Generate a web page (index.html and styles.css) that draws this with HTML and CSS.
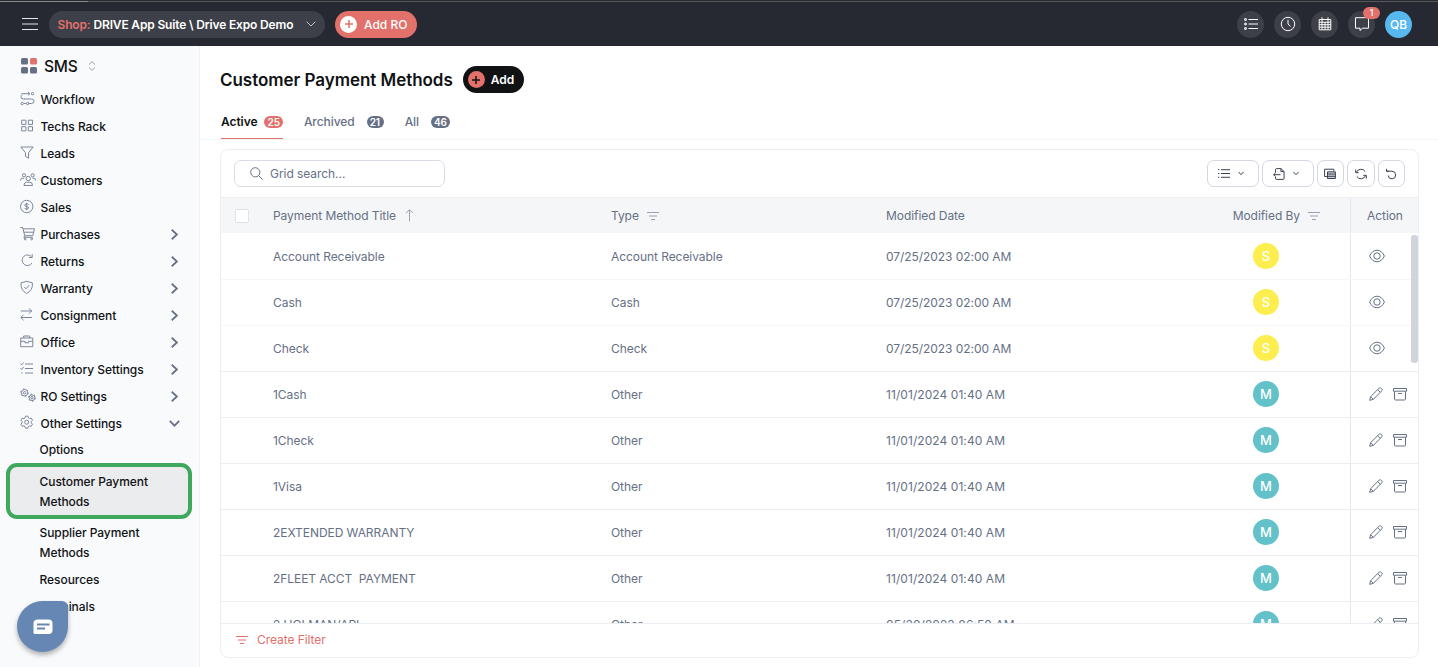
FILE: index.html
```html
<!DOCTYPE html>
<html lang="en">
<head>
<meta charset="UTF-8" />
<meta name="viewport" content="width=device-width, initial-scale=1" />
<title>Customer Payment Methods</title>
<link rel="stylesheet" href="styles.css">
</head>
<body>

<svg class="sprite" xmlns="http://www.w3.org/2000/svg">
  <symbol id="i-eye" viewBox="0 0 16 14"><path d="M.6 7C2.2 3.300 4.900 1.200 8 1.200S13.800 3.300 15.400 7C13.800 10.700 11.100 12.800 8 12.800S2.200 10.700.6 7z"/><circle cx="8" cy="7" r="3.200"/></symbol>
  <symbol id="i-pencil" viewBox="0 0 14 14"><path d="M.7 13.300l.9-3.600L10 1.300c1.500-1.500 4.200 1 2.700 2.600L4.300 12.400zM8.700 2.600l2.700 2.700M1.600 9.700l2.700 2.700"/></symbol>
  <symbol id="i-archive" viewBox="0 0 14 14"><path d="M.5 1.500h13v2.700H.5zM1.500 4.200V12q0 1 1 1h9q1 0 1-1V4.200M5 6.500h4"/></symbol>
  <symbol id="i-filter" viewBox="0 0 12 8"><path d="M0 .5h12M2 4h8M4 7.500h4"/></symbol>
  <symbol id="i-right" viewBox="0 0 8 10"><path d="M1.500.7L6.200 5 1.500 9.300"/></symbol>
  <symbol id="i-down" viewBox="0 0 10 8"><path d="M.7 1.700L5 6l4.300-4.300"/></symbol>
  <symbol id="i-list" viewBox="0 0 14 12"><path d="M4.500 1.500H14M4.500 6H14M4.500 10.500H14"/><path d="M.7.700h1.600v1.600H.7zM.7 5.200h1.600v1.600H.7zM.7 9.700h1.600v1.600H.7z"/></symbol>
</svg>

<header class="topbar">
  <svg class="menu-icon" width="16" height="12" viewBox="0 0 16 12"><path d="M0 .5h16M0 6h16M0 11.500h16"/></svg>
  <div class="shop">
    <span class="shop-label">Shop:</span>
    <span class="shop-name">DRIVE App Suite \ Drive Expo Demo</span>
    <svg class="icon shop-arrow" width="10" height="8"><use href="#i-down"/></svg>
  </div>
  <button class="add-ro">
    <span class="plus"><svg width="8" height="8" viewBox="0 0 8 8"><path d="M4 0v8M0 4h8"/></svg></span>
    Add RO
  </button>
  <div class="top-actions">
    <span class="round"><svg class="icon" width="14" height="12"><use href="#i-list"/></svg></span>
    <span class="round"><svg class="icon" width="16" height="16" viewBox="0 0 16 16"><circle cx="8" cy="8" r="6.700"/><path d="M8 3.700V8l2.500 2.500"/></svg></span>
    <span class="round"><svg class="icon" width="14" height="14" viewBox="0 0 14 14"><path d="M1.200 2.500h11.600v10.300H1.200zM1.200 5.200h11.600M1.200 7.700h11.600M1.200 10.200h11.600M4 .3V12.800M7 5v7.800M10 .3V12.800"/></svg></span>
    <span class="round"><svg class="icon" width="16" height="16" viewBox="0 0 16 16"><path d="M1.500 1.700h13v10.500H8.500L6 14.500v-2.300H1.500z"/></svg><b class="notify">1</b></span>
    <span class="round user">QB</span>
  </div>
</header>

<div class="layout">
  <aside class="sidebar">
    <div class="brand">
      <svg width="16" height="16" viewBox="0 0 16 16"><rect width="7" height="6.500" rx="1.500" fill="#667085"/><rect x="9" width="7" height="6.500" rx="1.500" fill="#e2706b"/><rect y="9" width="7" height="6.500" rx="1.500" fill="#667085"/><rect x="9" y="9" width="7" height="6.500" rx="1.500" fill="#667085"/></svg>
      <span>SMS</span>
      <svg class="icon" width="8" height="10" viewBox="0 0 8 10"><path d="M1 3.500L4 .7l3 2.800M1 6.500l3 2.800 3-2.800"/></svg>
    </div>
    <nav>
      <a class="nav-item"><svg class="icon" viewBox="0 0 16 16"><path d="M1.500 2.700h8.300M8 1l1.800 1.700L8 4.400M4 8h7.500q2.500 0 2.500 2.200t-2.500 2.300H8.200M4.500 8H3.300Q1 8 1 5.800 1 4.500 2 3.500M4 12.500h2"/><circle cx="12.500" cy="2.700" r="1.200"/><circle cx="2.200" cy="12.500" r="1.200"/><circle cx="7.600" cy="12.500" r="1.200"/></svg>Workflow</a>
      <a class="nav-item"><svg class="icon" viewBox="0 0 16 16"><path d="M1.700 2.200h4.200v4.200H1.700zM8.300 2.200h4.200v4.200H8.300zM1.700 8.700h4.200v4.200H1.700zM8.300 8.700h4.200v4.200H8.300z"/></svg>Techs Rack</a>
      <a class="nav-item"><svg class="icon" viewBox="0 0 16 16"><path d="M.8 2h12.400L8.500 7.800v5.400l-3-1.700V7.800z"/></svg>Leads</a>
      <a class="nav-item"><svg class="icon" viewBox="0 0 16 16"><circle cx="8.200" cy="6.500" r="2.200"/><circle cx="4" cy="3.300" r="1.600"/><circle cx="12.700" cy="3.300" r="1.600"/><path d="M4 13.500q0-3.300 2.500-3.300h3.500q2.500 0 2.500 3.300zM.5 8.500q0-2.300 2-2.300H4M12.500 6.200H14q1.700 0 1.700 2.300"/></svg>Customers</a>
      <a class="nav-item"><svg class="icon" viewBox="0 0 16 16"><circle cx="6.700" cy="7.500" r="6.200"/><path d="M8.600 5.800q-.4-1-1.900-1t-1.900 1.200 1.900 1.500 1.900 1.500-1.900 1.200-1.900-1M6.700 3.700v7.600"/></svg>Sales</a>
      <a class="nav-item"><svg class="icon" viewBox="0 0 16 16"><path d="M.3 1.500h2.400l2 8.200h8.100l1.700-6.900H3M4.700 9.700l-.9 1.600h9M4 6.200h9.700"/><circle cx="5.200" cy="13" r=".9"/><circle cx="11.700" cy="13" r=".9"/></svg>Purchases<svg class="icon arrow" width="8" height="10"><use href="#i-right"/></svg></a>
      <a class="nav-item"><svg class="icon" viewBox="0 0 16 16"><path d="M11.500 3.800A5.300 5.300 0 1 0 12 10M12.200 1.200v3.300H8.900"/></svg>Returns<svg class="icon arrow" width="8" height="10"><use href="#i-right"/></svg></a>
      <a class="nav-item"><svg class="icon" viewBox="0 0 16 16"><path d="M6.700 1.300l5.700 1.600q.7 7.500-5.700 10.600Q.3 10.400 1 2.900zM4.300 7l1.700 1.800 3.200-3.600"/></svg>Warranty<svg class="icon arrow" width="8" height="10"><use href="#i-right"/></svg></a>
      <a class="nav-item"><svg class="icon" viewBox="0 0 16 16"><path d="M.7 4h11M9 1.300L11.700 4 9 6.700M12 10.500H1M3.500 7.800L.8 10.500l2.700 2.700"/></svg>Consignment<svg class="icon arrow" width="8" height="10"><use href="#i-right"/></svg></a>
      <a class="nav-item"><svg class="icon" viewBox="0 0 16 16"><path d="M.7 4h12.100v8.700H.7zM3.700 4V2h6v2M.7 7.300h4.200v1.500h3.700V7.300h4.200"/></svg>Office<svg class="icon arrow" width="8" height="10"><use href="#i-right"/></svg></a>
      <a class="nav-item"><svg class="icon" viewBox="0 0 16 16"><path d="M5 3h8M5 7.500h8M5 12h8M.4 2.700l1.200 1.200 2-2.400M.4 7.200l1.200 1.200 2-2.400M1.200 12h1.500"/></svg>Inventory Settings<svg class="icon arrow" width="8" height="10"><use href="#i-right"/></svg></a>
      <a class="nav-item"><svg class="icon" viewBox="0 0 16 16"><circle cx="4.500" cy="4.700" r="3.200"/><circle cx="4.500" cy="4.700" r="1.200"/><circle cx="4.500" cy="4.700" r="3.900" stroke-dasharray="1.500 2.580"/><circle cx="12" cy="9.700" r="2.900"/><circle cx="12" cy="9.700" r="1.200"/><circle cx="12" cy="9.700" r="3.600" stroke-dasharray="1.500 2.270"/></svg>RO Settings<svg class="icon arrow" width="8" height="10"><use href="#i-right"/></svg></a>
      <a class="nav-item"><svg class="icon" viewBox="0 0 16 16"><path d="M5.500 1.200h2.400l.5 1.700 1.200.7 1.700-.4 1.200 2-1.200 1.300v1.400l1.200 1.300-1.200 2-1.700-.4-1.200.7-.5 1.700H5.500L5 11.500l-1.200-.7-1.700.4-1.200-2 1.200-1.300V6.500L.9 5.200l1.200-2 1.700.4L5 2.900z"/><circle cx="6.700" cy="7.200" r="2"/></svg>Other Settings<svg class="icon arrow" width="10" height="8"><use href="#i-down"/></svg></a>
      <a class="sub-item">Options</a>
      <a class="sub-item active">Customer Payment Methods</a>
      <a class="sub-item">Supplier Payment Methods</a>
      <a class="sub-item">Resources</a>
      <a class="sub-item">Terminals</a>
    </nav>
  </aside>

  <main>
    <div class="page-head">
      <h1>Customer Payment Methods</h1>
      <button class="add">
        <span class="plus"><svg width="8" height="8" viewBox="0 0 8 8"><path d="M4 0v8M0 4h8"/></svg></span>
        Add
      </button>
    </div>

    <div class="tabs">
      <a class="tab current">Active <span class="count">25</span></a>
      <a class="tab">Archived <span class="count">21</span></a>
      <a class="tab">All <span class="count">46</span></a>
    </div>

    <section class="card">
      <div class="toolbar">
        <div class="search">
          <svg class="icon" width="13" height="13" viewBox="0 0 13 13"><circle cx="5.300" cy="5.300" r="4.600"/><path d="M8.700 8.700l3.900 3.900"/></svg>
          <span>Grid search...</span>
        </div>
        <div class="tools">
          <button class="tool wide"><svg class="icon" width="12" height="9" viewBox="0 0 12 9"><path d="M3 .7h9M3 4.500h9M3 8.300h9M0 .7h1.300M0 4.500h1.300M0 8.300h1.300"/></svg><svg class="icon" width="6" height="5" viewBox="0 0 6 5"><path d="M.5 1L3 3.700 5.500 1"/></svg></button>
          <button class="tool wide"><svg class="icon" width="12" height="12" viewBox="0 0 12 12"><path d="M2.500 4.500V1.600q0-1 1-1h4.400l3.200 3v6.800q0 1-1 1H3.500q-1 0-1-1V9M7.900.6v3h3.200M7.500 6.700H.6M2.600 4.800l-2 1.900 2 1.900"/></svg><svg class="icon" width="6" height="5" viewBox="0 0 6 5"><path d="M.5 1L3 3.700 5.500 1"/></svg></button>
          <button class="tool"><svg class="icon" width="12" height="12" viewBox="0 0 12 12"><path d="M3 8.500H.6V1.200h9.200v2"/><path d="M3.500 3.800h7.900v6.700H3.500z" fill="#c9cdd6"/><path d="M4 6h7M4 8.300h7"/></svg></button>
          <button class="tool"><svg class="icon" width="12" height="12" viewBox="0 0 12 12"><path d="M1.300 4.500a5 5 0 0 1 9-.8M10.700 7.500a5 5 0 0 1-9 .8M.7 1.500v3.200h3M11.300 10.500V7.300h-3"/></svg></button>
          <button class="tool"><svg class="icon" width="12" height="12" viewBox="0 0 12 12"><path d="M1.500 3.200h5.400a3.800 3.800 0 1 1-3.800 4.300M1.500.8v2.400h2.400"/></svg></button>
        </div>
      </div>

      <div class="grid">
        <div class="row head">
          <div><span class="checkbox"></span></div>
          <div>Payment Method Title <svg class="icon sort" width="9" height="13" viewBox="0 0 9 13"><path d="M4.500 12.500V1M1 4.200L4.500.7 8 4.200"/></svg></div>
          <div>Type <svg class="icon" width="12" height="8"><use href="#i-filter"/></svg></div>
          <div>Modified Date</div>
          <div class="by">Modified By <svg class="icon" width="12" height="8"><use href="#i-filter"/></svg></div>
          <div class="actions">Action</div>
        </div>
        <div class="rows" id="rows"></div>
        <span class="scroll-thumb"></span>
      </div>

      <div class="card-foot">
        <svg class="icon" width="12" height="8"><use href="#i-filter"/></svg>
        <span>Create Filter</span>
      </div>
    </section>
  </main>
</div>

<div class="chat">
  <svg width="20" height="16" viewBox="0 0 20 16"><path d="M5 .5h10.500q4 0 4 4V11q0 4-4 4H2q-1.500 0-1.500-1.500V4.500q0-4 4.500-4z" fill="#fff"/><path d="M4 5.500h12.500M4 9.500h8" stroke="#6687b3" stroke-width="2"/></svg>
</div>

<script>
const methods = [
  ["Account Receivable", "Account Receivable", "07/25/2023 02:00 AM", "S"],
  ["Cash", "Cash", "07/25/2023 02:00 AM", "S"],
  ["Check", "Check", "07/25/2023 02:00 AM", "S"],
  ["1Cash", "Other", "11/01/2024 01:40 AM", "M"],
  ["1Check", "Other", "11/01/2024 01:40 AM", "M"],
  ["1Visa", "Other", "11/01/2024 01:40 AM", "M"],
  ["2EXTENDED WARRANTY", "Other", "11/01/2024 01:40 AM", "M"],
  ["2FLEET ACCT  PAYMENT", "Other", "11/01/2024 01:40 AM", "M"],
  ["2 HOLMAN/ARI", "Other", "05/30/2023 06:50 AM", "M"]
];

const viewIcon = `<svg class="icon" width="16" height="14"><use href="#i-eye"/></svg>`;
const editIcons = `<svg class="icon" width="14" height="14"><use href="#i-pencil"/></svg>
  <svg class="icon" width="14" height="14"><use href="#i-archive"/></svg>`;

// System methods (S) can only be viewed
document.getElementById("rows").innerHTML = methods.map(([title, type, date, by]) => `
  <div class="row">
    <div></div>
    <div>${title}</div>
    <div>${type}</div>
    <div class="${by === "M" ? "date" : ""}">${date}</div>
    <div class="by"><span class="avatar ${by === "S" ? "system" : ""}">${by}</span></div>
    <div class="actions">${by === "S" ? viewIcon : editIcons}</div>
  </div>`).join("");
</script>

</body>
</html>
```
FILE: styles.css
```css
* {
  box-sizing: border-box;
}
body {
  margin: 0;
  height: 667px;
  overflow: hidden;
  display: flex;
  flex-direction: column;
  font-family: Inter, "Liberation Sans", sans-serif;
  font-size: 12px;
  letter-spacing: -.06px;
  color: #667085;
  background: #fff;
}
button {
  font-family: inherit;
  border: none;
  padding: 0;
}
svg {
  flex: none;
  display: block;
  fill: none;
}
.sprite {
  position: absolute;
  width: 0;
  height: 0;
}
.icon {
  stroke: currentColor;
  stroke-width: 1;
}

/* top bar */
.topbar {
  height: 46px;
  flex: none;
  display: flex;
  align-items: center;
  padding: 2px 26px 0 22px;
  color: #fff;
  background: linear-gradient(90deg, #8a8a8a 88px, #58585a 88px) 0 1px / 100% 1px no-repeat #262932;
}
.menu-icon {
  stroke: #e6e7ea;
  margin-right: 11px;
}
.shop {
  width: 276px;
  height: 27px;
  display: flex;
  align-items: center;
  padding: 0 9px 0 8.500px;
  border-radius: 14px;
  background: #3d4048;
  font-weight: 600;
  letter-spacing: -.16px;
  white-space: nowrap;
}
.shop-label {
  color: #e2706b;
  margin-right: 3px;
}
.shop-arrow {
  margin-left: auto;
  color: #c3c5cb;
}
.add-ro {
  width: 82px;
  height: 27px;
  margin-left: 10px;
  padding-left: 5px;
  display: flex;
  align-items: center;
  gap: 7px;
  border-radius: 14px;
  background: #e2706b;
  color: #fff;
  font-size: 12px;
  font-weight: 500;
  white-space: nowrap;
}
.plus {
  width: 17px;
  height: 17px;
  flex: none;
  border-radius: 50%;
  display: grid;
  place-items: center;
  background: #fff;
  stroke: #e2706b;
  stroke-width: 1.5;
}
.top-actions {
  margin-left: auto;
  display: flex;
  gap: 10px;
}
.round {
  position: relative;
  width: 27px;
  height: 27px;
  border-radius: 50%;
  display: grid;
  place-items: center;
  background: #3d4048;
}
.user {
  background: #56b8ee;
  font-size: 12px;
  font-weight: 500;
}
.notify {
  position: absolute;
  left: 15px;
  top: -4px;
  width: 17px;
  height: 12px;
  border-radius: 6px;
  background: #e2706b;
  font-size: 9px;
  font-weight: 500;
  line-height: 12px;
  text-align: center;
}

.layout {
  flex: 1;
  min-height: 0;
  display: flex;
}

/* sidebar */
.sidebar {
  width: 200px;
  flex: none;
  border-right: 1px solid #eff0f3;
  background: #f9fafc;
  color: #101214;
  font-weight: 500;
}
.brand {
  height: 39px;
  padding: 0 0 0 21px;
  display: flex;
  align-items: center;
  font-size: 15.500px;
}
.brand span {
  margin: 1px 10px 0 7px;
  letter-spacing: -.2px;
}
.brand .icon {
  color: #98a2b3;
}
.nav-item {
  height: 27px;
  padding: 1px 19px 0 20px;
  display: flex;
  align-items: center;
  white-space: nowrap;
}
.nav-item .icon {
  width: 16px;
  height: 16px;
  margin-right: 4.500px;
  color: #7d879b;
}
.nav-item .arrow {
  width: 11px;
  height: 11px;
  margin: 0 0 0 auto;
  color: #667085;
  stroke-width: 1.600;
}
.sub-item {
  display: block;
  padding: 4px 30px 3px 39.500px;
  line-height: 20px;
}
.sub-item.active {
  margin: 0 7px 0 6px;
  padding: 4.500px 30px 3.500px 29.500px;
  border: 4px solid #3fa85c;
  border-radius: 11px;
  background: #ebecee;
}

/* page */
main {
  flex: 1;
  min-width: 0;
}
.page-head {
  height: 58px;
  padding: 9px 20px 0;
  display: flex;
  align-items: center;
  gap: 10px;
}
h1 {
  margin: 0;
  font-size: 17px;
  font-weight: 600;
  letter-spacing: -.04px;
  color: #101214;
}
.add {
  width: 61px;
  height: 27px;
  padding-left: 5px;
  display: flex;
  align-items: center;
  gap: 6px;
  border-radius: 14px;
  background: #101214;
  color: #fff;
  font-size: 12px;
  font-weight: 600;
}
.add .plus {
  background: #e2706b;
  stroke: #101214;
}
.tabs {
  height: 36px;
  padding: 0 21px;
  display: flex;
  gap: 21px;
  border-bottom: 1px solid #f3f4f6;
}
.tab {
  height: 35px;
  display: flex;
  align-items: center;
  gap: 12px;
  font-weight: 500;
}
.tab.current {
  gap: 7px;
  color: #101214;
  font-weight: 600;
  box-shadow: inset 0 -1px #e2706b;
}
.count {
  min-width: 17px;
  height: 12px;
  padding: 0 3px;
  border-radius: 6px;
  background: #667085;
  color: #fff;
  font-size: 10px;
  font-weight: 600;
  line-height: 12px;
}
.current .count {
  background: #e2706b;
}

/* grid card */
.card {
  width: 1199px;
  height: 509px;
  margin: 9px 0 0 20px;
  display: flex;
  flex-direction: column;
  border: 1px solid #eceef2;
  border-radius: 8px;
  overflow: hidden;
}
.toolbar {
  height: 47px;
  flex: none;
  padding: 0 13px;
  display: flex;
  align-items: center;
  justify-content: space-between;
}
.search {
  width: 211px;
  height: 27px;
  padding-left: 15px;
  display: flex;
  align-items: center;
  gap: 7px;
  border: 1px solid #d9dce5;
  border-radius: 7px;
}
.tools {
  display: flex;
  gap: 3px;
}
.tool {
  width: 27.500px;
  height: 27px;
  display: flex;
  align-items: center;
  justify-content: center;
  gap: 8px;
  border: 1px solid #d5d8e2;
  border-radius: 7px;
  background: #fff;
  color: #3c4250;
}
.tool.wide {
  width: 52px;
  padding-right: 3px;
}
.grid {
  position: relative;
  flex: 1;
  min-height: 0;
  overflow: hidden;
}
.row {
  height: 46px;
  display: grid;
  grid-template-columns: 40px 338px 275px 308px 168px 68px;
  border-top: 1px solid #eceef2;
}
.rows .row:first-child {
  border-color: transparent;
}
.rows .row:nth-child(2),
.rows .row:nth-child(3) {
  border-color: #f7f7f9;
}
.row > div {
  display: flex;
  align-items: center;
  padding: 0 0 0 12px;
  white-space: pre;
}
.rows .row > div {
  padding-bottom: 1px;
}
.row > .date {
  letter-spacing: .07px;
}
.row.head {
  height: 36px;
  background: #f5f6f8;
}
.head .icon {
  margin-left: 5px;
  color: #98a2b3;
}
.head .sort {
  margin-left: 6px;
}
.checkbox {
  width: 14px;
  height: 14px;
  margin-left: 2px;
  border: 1px solid #dfe2e8;
  border-radius: 2px;
  background: #fff;
}
.row > .by {
  padding-left: 0;
  justify-content: center;
}
.row.head > .by {
  padding-left: 21px;
}
.row > .actions {
  padding-left: 17.500px;
  gap: 10px;
  white-space: normal;
  border-left: 1px solid #e6e8ed;
}
.row.head > .actions {
  padding-left: 16px;
}
.avatar {
  width: 26px;
  height: 26px;
  border-radius: 50%;
  background: #63c1c9;
  color: #fff;
  font-size: 13px;
  font-weight: 500;
  line-height: 26px;
  text-align: center;
}
.avatar.system {
  background: #fcee4f;
}
.scroll-thumb {
  position: absolute;
  top: 38px;
  right: 0;
  width: 7px;
  height: 128px;
  border-radius: 3px;
  background: #d0d5dd;
}
.card-foot {
  height: 34px;
  flex: none;
  padding: 0 0 2px 15px;
  display: flex;
  align-items: center;
  gap: 9px;
  border-top: 1px solid #eceef2;
  color: #e2706b;
}

/* chat launcher */
.chat {
  position: fixed;
  left: 17px;
  top: 601px;
  width: 51px;
  height: 51px;
  display: grid;
  place-items: center;
  border-radius: 50% 6px 50% 50%;
  background: #6687b3;
  box-shadow: 0 3px 5px rgba(0, 0, 0, .3);
}
```
